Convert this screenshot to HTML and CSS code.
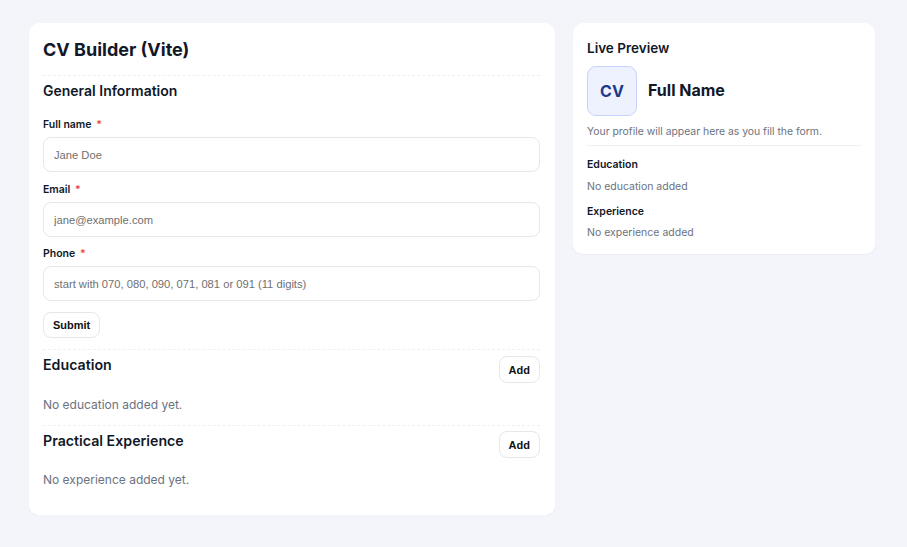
FILE: index.html
```html
<!DOCTYPE html>
<html>
<head>
<meta charset="utf-8">
<link rel="stylesheet" href="styles.css">
</head>
<body>
<div class="app">
  <main class="card form-card">
    <h1 class="title">CV Builder (Vite)</h1>
    <section class="section general">
      <h2 class="sec-title">General Information</h2>
      <div class="field">
        <label class="label">Full name <span class="req">*</span></label>
        <input class="input" type="text" placeholder="Jane Doe">
      </div>
      <div class="field">
        <label class="label">Email <span class="req">*</span></label>
        <input class="input" type="text" placeholder="jane@example.com">
      </div>
      <div class="field">
        <label class="label">Phone <span class="req">*</span></label>
        <input class="input" type="text" placeholder="start with 070, 080, 090, 071, 081 or 091 (11 digits)">
      </div>
      <button class="btn">Submit</button>
    </section>
    <section class="section list-sec">
      <div class="sec-head">
        <h2 class="sec-title">Education</h2>
        <button class="btn">Add</button>
      </div>
      <p class="empty">No education added yet.</p>
    </section>
    <section class="section list-sec">
      <div class="sec-head">
        <h2 class="sec-title">Practical Experience</h2>
        <button class="btn">Add</button>
      </div>
      <p class="empty">No experience added yet.</p>
    </section>
  </main>
  <aside class="card preview">
    <h2 class="pv-title">Live Preview</h2>
    <div class="pv-head">
      <div class="avatar">CV</div>
      <div class="pv-name">Full Name</div>
    </div>
    <p class="pv-note">Your profile will appear here as you fill the form.</p>
    <div class="pv-body">
      <h3 class="pv-sub">Education</h3>
      <p class="pv-empty">No education added</p>
      <h3 class="pv-sub pv-sub-2">Experience</h3>
      <p class="pv-empty pv-empty-2">No experience added</p>
    </div>
  </aside>
</div>
</body>
</html>
```
FILE: styles.css
```css
* { box-sizing: border-box; }
html, body { margin: 0; padding: 0; }
body {
  background: #f4f5fa;
  font-family: Inter, "Noto Sans", sans-serif;
  color: #111827;
}
.app {
  display: grid;
  grid-template-columns: 526px 302px;
  gap: 18px;
  align-items: start;
  padding: 23px 0 0 29px;
}
.card {
  background: #fff;
  border-radius: 10px;
  box-shadow: 0 1px 2px rgba(16, 24, 40, 0.04);
}
.form-card {
  padding: 14px 15px 15px 14px;
}
.title {
  margin: 0;
  font-size: 18px;
  font-weight: 700;
  line-height: 26px;
  padding-bottom: 12px;
  border-bottom: 1px dashed #eef0f3;
}
.section { border-bottom: 1px dashed #eef0f3; }
.section:last-child { border-bottom: none; }
.general { padding: 6px 0 11px; }
.sec-title {
  margin: 0;
  font-size: 14px;
  font-weight: 600;
  line-height: 18px;
}
.general .sec-title { margin-bottom: 18px; }
.field { margin-bottom: 11px; }
.field + .field + .field { margin-top: -1px; }
.label {
  display: block;
  font-size: 10.5px;
  font-weight: 600;
  line-height: 14px;
  margin-bottom: 5px;
}
.req { color: #ef4444; margin-left: 2px; }
.input {
  display: block;
  width: 100%;
  height: 35px;
  border: 1px solid #e6e7eb;
  border-radius: 8px;
  padding: 0 10px;
  font-family: "Liberation Sans", Arial, sans-serif;
  font-size: 11.2px;
  color: #111827;
  background: #fff;
  outline: none;
}
.input::placeholder { color: #707070; }
.field:last-of-type { margin-bottom: 11px; }
.btn {
  font-family: "Liberation Sans", Arial, sans-serif;
  font-weight: 700;
  font-size: 11px;
  color: #111;
  background: #fff;
  border: 1px solid #e5e7eb;
  border-radius: 8px;
  height: 26px;
  padding: 0 9px;
}
.list-sec { padding: 6px 0 11px; }
.sec-head {
  display: flex;
  justify-content: space-between;
  align-items: flex-start;
}
.list-sec .sec-title { margin-top: 0; font-size: 14.2px; }
.list-sec .btn { height: 27px; padding: 0 9px; }
.list-sec + .list-sec .btn { margin-top: -1px; }
.empty {
  margin: 13px 0 0;
  font-size: 12px;
  line-height: 18px;
  color: #6b7280;
}
.preview { padding: 16px 14px 14px 14px; }
.pv-title {
  margin: 0;
  font-size: 13.5px;
  font-weight: 600;
  line-height: 18px;
}
.pv-head {
  display: flex;
  align-items: center;
  gap: 11px;
  margin-top: 9px;
}
.avatar {
  width: 50px;
  height: 50px;
  border-radius: 9px;
  background: #eef2ff;
  border: 1px solid #c7d2fe;
  color: #1e3a8a;
  font-weight: 700;
  font-size: 16px;
  display: flex;
  align-items: center;
  justify-content: center;
}
.pv-name {
  font-size: 16px;
  font-weight: 700;
  margin-top: -2px;
}
.pv-note {
  margin: 9px 0 0;
  font-size: 10.4px;
  line-height: 14px;
  color: #6b7280;
  padding-bottom: 6px;
  border-bottom: 1px solid #eef0f3;
}
.pv-body { padding-top: 6px; }
.pv-sub {
  margin: 6px 0 0;
  font-size: 10.5px;
  font-weight: 600;
  line-height: 14px;
}
.pv-sub-2 { margin-top: 11px; }
.pv-empty {
  margin: 8px 0 0;
  font-size: 10.5px;
  line-height: 14px;
  color: #6b7280;
}
.pv-empty-2 { margin-top: 7px; }
```
